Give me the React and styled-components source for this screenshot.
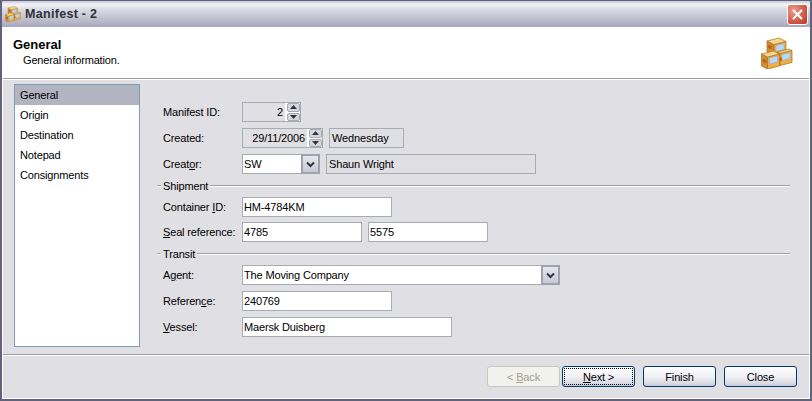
import styled, { createGlobalStyle } from "styled-components";

const GlobalStyle = createGlobalStyle`
  html, body {
    margin: 0;
    padding: 0;
    background: #e0dfe3;
  }
  * {
    box-sizing: border-box;
  }
`;

const Crate = ({ x, y, side, front, height }) => (
  <g transform={`translate(${x} ${y})`}>
    <path
      d={`M0 3 L${side} ${3 + side / 2} L${side} ${3 + side / 2 + height} L0 ${3 + height} Z`}
      fill="#d58f2e"
    />
    <path
      d={`M${side} ${3 + side / 2} L${side + front} ${side / 2} L${side + front} ${side / 2 + height} L${side} ${3 + side / 2 + height} Z`}
      fill="#eeae46"
    />
    <path
      d={`M0 3 L${front} 0 L${side + front} ${side / 2} L${side} ${3 + side / 2} Z`}
      fill="#f9d78a"
    />
    <path
      d={`M${side + 2} ${side / 2 + 4} L${side + front - 2} ${side / 2 + 2} L${side + front - 2} ${side / 2 + 8} L${side + 2} ${side / 2 + 10} Z`}
      fill="#bcd6f6"
      stroke="#86a4d0"
      strokeWidth="0.5"
    />
    <path d={`M1.5 ${height - 4} L4.5 ${height - 3} L4.5 ${height} L1.5 ${height - 1} Z`} fill="#c9552c" />
  </g>
);

const BoxesIcon = ({ size }) => (
  <svg width={size} height={size} viewBox="0 0 32 32">
    <g stroke="#a8701c" strokeWidth="0.7" strokeLinejoin="round">
      <Crate x={6} y={1} side={7} front={12} height={11} />
      <Crate x={16} y={12} side={3} front={12} height={12} />
      <Crate x={0.5} y={14} side={6} front={12} height={12} />
    </g>
  </svg>
);

const ChevronDown = () => (
  <svg width="9" height="7" viewBox="0 0 9 7">
    <path d="M1 1.5 L4.5 5 L8 1.5" fill="none" stroke="#33333d" strokeWidth="2" />
  </svg>
);

const SpinArrow = ({ up }) => (
  <svg width="7" height="4" viewBox="0 0 7 4">
    <path d={up ? "M0 4 L3.5 0 L7 4 Z" : "M0 0 L3.5 4 L7 0 Z"} fill="#33333d" />
  </svg>
);

const Frame = styled.div`
  width: 812px;
  height: 401px;
  display: flex;
  flex-direction: column;
  overflow: hidden;
  font-family: "Liberation Sans", sans-serif;
  font-size: 11px;
  letter-spacing: -0.15px;
  color: #000;
  background: #e0dfe3;
  border: solid #62627c;
  border-width: 1px 2px 2px 2px;
`;

const TitleBar = styled.div`
  height: 26px;
  flex: none;
  display: flex;
  align-items: center;
  padding: 0 2px 0 3px;
  gap: 4px;
  background: linear-gradient(
    180deg,
    #c9c9d8 0%,
    #f4f4f8 14%,
    #dcdce6 30%,
    #c6c6d4 60%,
    #b4b4c6 85%,
    #a6a6ba 100%
  );
`;

const TitleText = styled.span`
  font-size: 12.5px;
  font-weight: 700;
  letter-spacing: 0.3px;
  color: #30303a;
  flex: 1;
`;

const CloseButton = styled.div`
  width: 21px;
  height: 21px;
  border: 1px solid #fff;
  border-radius: 3px;
  background: radial-gradient(circle at 30% 30%, #ec9a88, #c8503c 70%, #a83a28);
  display: flex;
  align-items: center;
  justify-content: center;
`;

const Inner = styled.div`
  flex: 1;
  display: flex;
  flex-direction: column;
  min-height: 0;
  border: 1px solid #fff;
  border-top: 0;
`;

const Header = styled.div`
  height: 52px;
  flex: none;
  background: #fff;
  border-bottom: 1px solid #9d9da1;
  display: flex;
  justify-content: space-between;
  padding: 10px 16px 0 10px;
`;

const HeaderTitle = styled.div`
  font-weight: 700;
  font-size: 13px;
  letter-spacing: 0;
  line-height: 16px;
`;

const HeaderSub = styled.div`
  line-height: 15px;
  padding-left: 10px;
`;

const Body = styled.div`
  height: 275px;
  flex: none;
  display: flex;
  border-top: 1px solid #fff;
  padding: 4px 0 0 11px;
`;

const Sidebar = styled.ul`
  width: 126px;
  height: 263px;
  margin: 0;
  padding: 0;
  list-style: none;
  background: #fff;
  border: 1px solid #7f9db9;
`;

const SideItem = styled.li`
  height: 20px;
  line-height: 20px;
  padding-left: 5px;
  background: ${(p) => (p.$active ? "#b2b4bf" : "transparent")};
`;

const Form = styled.div`
  flex: 1;
  display: flex;
  flex-direction: column;
  padding: 18px 19px 0 17px;
`;

const Fields = styled.div`
  display: flex;
  flex-direction: column;
  gap: ${(p) => p.$gap ?? 6}px;
  padding-left: 6px;
`;

const Row = styled.div`
  display: flex;
  align-items: center;
  height: 20px;
  gap: 6px;
`;

const Label = styled.label`
  width: 79px;
  margin-right: -6px;
  flex: none;
  white-space: nowrap;
`;

const Box = styled.div`
  width: ${(p) => p.$w}px;
  height: 20px;
  line-height: 18px;
  padding: 0 ${(p) => (p.$right ? 0 : 3)}px 0 ${(p) => (p.$grey ? 2 : 1)}px;
  border: 1px solid #a5acb2;
  background: ${(p) => (p.$grey ? "#e0dfe3" : "#fff")};
  display: flex;
  align-items: center;
  justify-content: ${(p) => (p.$right ? "flex-end" : "flex-start")};
  white-space: nowrap;
`;

const Spinner = styled.div`
  width: 15px;
  height: 18px;
  margin-left: 2px;
  padding-left: 2px;
  flex: none;
  display: flex;
  flex-direction: column;
  gap: 1px;
  background: #fff;
`;

const SpinPart = styled.div`
  flex: 1;
  background: #d6d6de;
  border: 1px solid #a8a8b2;
  border-radius: 2px;
  display: flex;
  align-items: center;
  justify-content: center;
`;

const ComboButton = styled.div`
  width: 19px;
  height: 20px;
  margin-left: auto;
  margin-right: -4px;
  flex: none;
  background: linear-gradient(180deg, #e6e6ec, #c8c9d8);
  border: 2px solid #a0a0ae;
  display: flex;
  align-items: center;
  justify-content: center;
`;

const Group = styled.div`
  display: flex;
  align-items: center;
  height: 12px;
  gap: 2px;
  margin: 6px 0 5px;
  line-height: 12px;

  &::before {
    content: "";
    width: 4px;
    height: 2px;
    background: linear-gradient(180deg, #a0a0a4 50%, #fff 50%);
  }

  &::after {
    content: "";
    flex: 1;
    height: 2px;
    background: linear-gradient(180deg, #a0a0a4 50%, #fff 50%);
  }
`;

const Footer = styled.div`
  flex: 1;
  border-top: 1px solid #9d9da1;
  box-shadow: inset 0 1px 0 #fff;
  display: flex;
  justify-content: flex-end;
  gap: 2px;
  padding: 11px 12px 0 0;
`;

const Button = styled.button`
  width: 73px;
  height: 21px;
  padding: 0;
  margin-left: ${(p) => p.$ml ?? 0}px;
  font: inherit;
  letter-spacing: inherit;
  color: ${(p) => (p.disabled ? "#a1a192" : "#000")};
  border: 1px solid ${(p) => (p.disabled ? "#c9c7ba" : "#003c74")};
  border-radius: 3px;
  background: ${(p) =>
    p.disabled ? "#f1f1ed" : "linear-gradient(180deg, #fff 0%, #f0f0f5 50%, #d6d7e2 90%, #c4c5d6 100%)"};
  outline: ${(p) => (p.$focus ? "1px dotted #000" : "none")};
  outline-offset: -3px;
`;

const stops = ["General", "Origin", "Destination", "Notepad", "Consignments"];

const Spin = () => (
  <Spinner>
    <SpinPart><SpinArrow up /></SpinPart>
    <SpinPart><SpinArrow /></SpinPart>
  </Spinner>
);

export default function App() {
  return (
    <>
      <GlobalStyle />
      <Frame>
        <TitleBar>
          <BoxesIcon size={16} />
          <TitleText>Manifest - 2</TitleText>
          <CloseButton>
            <svg width="13" height="13" viewBox="0 0 13 13">
              <path d="M2 2 L11 11 M11 2 L2 11" stroke="#fff" strokeWidth="2" />
            </svg>
          </CloseButton>
        </TitleBar>
        <Inner>
          <Header>
            <div>
              <HeaderTitle>General</HeaderTitle>
              <HeaderSub>General information.</HeaderSub>
            </div>
            <BoxesIcon size={32} />
          </Header>
          <Body>
            <Sidebar>
              {stops.map((s, i) => (
                <SideItem key={s} $active={i === 0}>
                  {s}
                </SideItem>
              ))}
            </Sidebar>
            <Form>
              <Fields>
                <Row>
                  <Label>Manifest ID:</Label>
                  <Box $w={59} $grey $right>
                    2
                    <Spin />
                  </Box>
                </Row>
                <Row>
                  <Label>Created:</Label>
                  <Box $w={81} $grey $right>
                    29/11/2006
                    <Spin />
                  </Box>
                  <Box $w={75} $grey>Wednesday</Box>
                </Row>
                <Row>
                  <Label>Creat<u>o</u>r:</Label>
                  <Box $w={78}>
                    SW
                    <ComboButton><ChevronDown /></ComboButton>
                  </Box>
                  <Box $w={210} $grey>Shaun Wright</Box>
                </Row>
              </Fields>
              <Group>Shipment</Group>
              <Fields $gap={5}>
                <Row>
                  <Label>Container <u>I</u>D:</Label>
                  <Box $w={150}>HM-4784KM</Box>
                </Row>
                <Row>
                  <Label><u>S</u>eal reference:</Label>
                  <Box $w={120}>4785</Box>
                  <Box $w={120}>5575</Box>
                </Row>
              </Fields>
              <Group>Transit</Group>
              <Fields>
                <Row>
                  <Label>A<u>g</u>ent:</Label>
                  <Box $w={318}>
                    The Moving Company
                    <ComboButton><ChevronDown /></ComboButton>
                  </Box>
                </Row>
                <Row>
                  <Label>Referen<u>c</u>e:</Label>
                  <Box $w={150}>240769</Box>
                </Row>
                <Row>
                  <Label><u>V</u>essel:</Label>
                  <Box $w={210}>Maersk Duisberg</Box>
                </Row>
              </Fields>
            </Form>
          </Body>
          <Footer>
            <Button disabled>&lt; <u>B</u>ack</Button>
            <Button $focus>
              <u>N</u>ext &gt;
            </Button>
            <Button $ml={6}>Finish</Button>
            <Button $ml={6}>Close</Button>
          </Footer>
        </Inner>
      </Frame>
    </>
  );
}
